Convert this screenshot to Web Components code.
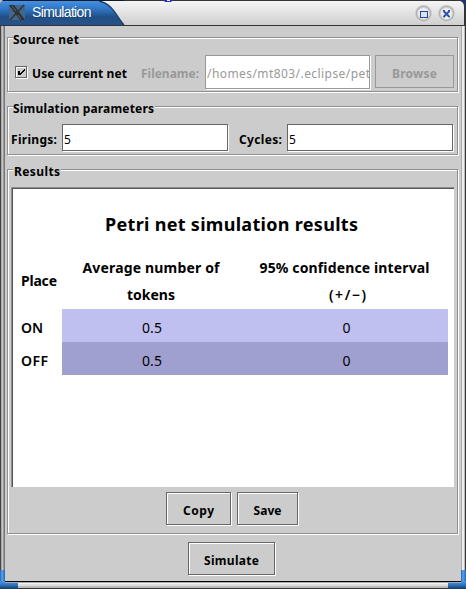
<!DOCTYPE html>
<html lang="en"><head><meta charset="utf-8"><title>Simulation</title>
<style>
html,body{margin:0;width:466px;height:589px;overflow:hidden;background:#ccc}
body{font-family:"Noto Sans","Open Sans",sans-serif;font-size:12px;color:#000}
</style></head><body>
<sim-window></sim-window>
<script>
const define=(name,html,setup)=>{
  const t=document.createElement('template');t.innerHTML=html;
  customElements.define(name,class extends HTMLElement{
    connectedCallback(){
      if(this.shadowRoot)return;
      this.attachShadow({mode:'open'}).append(t.content.cloneNode(true));
      if(setup)setup(this,this.shadowRoot);
    }
  });
};

/* A label whose letter spacing is set so that the text takes up the width w. */
define('ui-text',`<style>
:host{display:inline-block;white-space:pre;font-weight:700;line-height:16px;height:16px;flex:none}
:host([plain]){font-weight:400}
span{display:inline-block}
</style><span><slot></slot></span>`,(el,root)=>{
  const w=+el.getAttribute('w'),n=el.textContent.length,s=root.querySelector('span');
  if(!w)return;
  el.style.width=w+'px';
  const nat=s.getBoundingClientRect().width;
  s.style.letterSpacing=((w-nat)/Math.max(1,n-1))+'px';
});

define('ui-group',`<style>
:host{display:block;box-sizing:border-box;border:1px solid #8f8f8f;box-shadow:1px 1px #fff,inset 1px 1px #fff;position:relative}
.t{position:absolute;left:5px;top:-6px;background:#ccc;height:16px;padding-right:1px;display:flex}
</style><div class="t"><slot name="title"></slot></div><slot></slot>`);

define('ui-field',`<style>
:host{display:block;box-sizing:border-box;background:#fff;border:1px solid #666;box-shadow:1px 1px #fff;overflow:hidden;flex:none;height:27px;padding:6px 0 0 1px}
:host([disabled]){border-color:#999;color:#999;height:34px;padding-top:9px}
</style><slot></slot>`);

define('ui-button',`<style>
:host{display:flex;box-sizing:border-box;border:1px solid #666;box-shadow:1px 1px #fff,inset 1px 1px #fff;height:33px;justify-content:center;padding-top:10px;flex:none}
:host([disabled]){border-color:#999;color:#999;box-shadow:none}
</style><slot></slot>`);

define('ui-check',`<style>
:host{display:block;flex:none;width:13px;height:13px}svg{display:block}
</style><svg width="13" height="13" shape-rendering="crispEdges"><rect x=".5" y=".5" width="11" height="11" fill="none" stroke="#666"/><path d="M1.5 11V1.5H11M12.5 1V12.5H1" fill="none" stroke="#fff"/><path d="M3 5h2v2h1V6h1V5h1V4h1V3h1v2H9v1H8v1H7v1H6v1H3z" fill="#000"/></svg>`);

define('title-bar',`<style>
:host{display:block;height:26px}
svg{display:block}
.r{display:grid}.r>*{grid-area:1/1}
.n{font:14px/16px "Liberation Sans",Arial,sans-serif;color:#fff;margin:4px 0 0 32px;font-weight:400;text-shadow:1px 1px 1px #194778}
</style><div class="r"><svg width="466" height="26">
<defs><linearGradient id="g" x2="0" y2="1"><stop offset="0" stop-color="#f5f5f5"/><stop offset="1" stop-color="#cfcfcf"/></linearGradient>
<linearGradient id="b" x2="0" y2="1"><stop offset="0" stop-color="#4590e4"/><stop offset=".4" stop-color="#2b6fba"/><stop offset=".65" stop-color="#225085"/><stop offset="1" stop-color="#24528a"/></linearGradient>
<radialGradient id="c"><stop offset=".55" stop-color="#ededed"/><stop offset=".78" stop-color="#b2b2b2"/><stop offset="1" stop-color="#e6e6e6"/></radialGradient></defs>
<rect width="466" height="26" fill="#333"/><path d="M458 0h8v10h-1V4l-4-3z" fill="#1c3475"/>
<path d="M0 1H460Q464 2 464 7V25H0z" fill="url(#g)"/>
<path d="M0 1H98C112 3 115 15 124 25H0z" fill="url(#b)"/><path d="M99 1C113 4 116 16 124 25" fill="none" stroke="#193d6b" stroke-width="1.3"/>
<path d="M0 .5H124" stroke="#111b2b"/><path d="M0 0h3L0 3z" fill="#bbb"/><path d="M163 0h10l-2 2h-6z" fill="#2630c8"/><path d="M167 0h3v1h-3z" fill="#eef"/>
<rect x="9" y="5" width="16" height="15" fill="#40658f"/><path d="M9 5h5l11 15h-5z" fill="#302f30"/><path d="M24 5 10 20" stroke="#3a3535" stroke-width="1.7"/><path d="M12 6l4 5M18 15l3 4" stroke="#777" stroke-width=".8"/>
<circle cx="423.5" cy="13.500" r="9" fill="url(#c)"/><circle cx="446.500" cy="13.500" r="9" fill="url(#c)"/>
<rect x="420.500" y="11.500" width="7" height="6" fill="#dce3f2" stroke="#2446a0"/>
<path d="M443.500 11l6 6M449.500 11l-6 6" stroke="#2c50ae" stroke-width="1.9"/><path d="M443 10.500h2M448 10.500h2M443 16.500h2M448 16.500h2" stroke="#2c50ae"/>
</svg><ui-text class="n" w="59.500">Simulation</ui-text></div>`);

define('result-table',`<style>
:host{display:block}
.h{font-size:18px;text-align:center;padding:24px 4px 0 0;height:46px;line-height:24px;box-sizing:content-box}
.h ui-text{line-height:24px;height:24px}
.g{display:grid;grid-template-columns:49px 180px 206px;grid-template-rows:51px 33px 33px;width:435px;font-size:14px}
.g>*{display:flex;justify-content:center}
.g>.p{justify-content:flex-start;padding-left:8px}
.g>.col{flex-direction:column;justify-content:flex-start;align-items:center;gap:11px;margin-top:2px}
.a,.b{padding-top:11px}.a.v{background:#c0c0f0}.b.v{background:#a0a0d0}
.mid{padding-right:2px}.a.last,.b.last{padding-left:3px}.col.last{padding-right:1px}
</style><div class="h"><ui-text w="253">Petri net simulation results</ui-text></div>
<div class="g"><div class="p" style="padding-top:15px"><ui-text w="36">Place</ui-text></div>
<div class="col mid"><ui-text w="137">Average number of</ui-text><ui-text w="48">tokens</ui-text></div>
<div class="col last"><ui-text w="170">95% confidence interval</ui-text><ui-text w="37" style="margin-right:-6px;font-weight:600">(+/−)</ui-text></div>
<div class="p a"><ui-text w="22" style="font-weight:600">ON</ui-text></div><div class="a v"><ui-text plain w="20">0.5</ui-text></div><div class="a v last"><ui-text plain>0</ui-text></div>
<div class="p b"><ui-text w="27" style="font-weight:600">OFF</ui-text></div><div class="b v"><ui-text plain w="20">0.5</ui-text></div><div class="b v last"><ui-text plain>0</ui-text></div></div>`);

define('sim-window',`<style>
:host{display:grid;grid-template:26px 555px 8px/5px 456px 5px;width:466px;height:589px;background:#ccc}
title-bar{grid-column:1/4}
.l{background:linear-gradient(90deg,#444 1px,#aaa 1px 2px,#c8c8c8 2px 3px,#999 3px 4px,#777 4px)}
.rr{background:linear-gradient(90deg,#aaa 1px,#eee 1px 3px,#bbb 3px 4px,#333 4px)}
.l,.rr{display:flex;flex-direction:column;justify-content:flex-end}
.l i,.rr i{height:11px;background:linear-gradient(90deg,#2360a5,#58a4f5 40%,#2765ac)}
.f{grid-column:1/4;box-sizing:border-box;display:flex;justify-content:space-between;background:linear-gradient(#000 1px,#aaa 1px 2px,#f1f1f1 2px 3px,#ddd 3px 5px,#bbb 5px 7px,#333 7px)}
.f i{width:18px;height:8px;background:linear-gradient(#4b95e6,#3580d0 35%,#225c9e 70%,#153963);clip-path:polygon(0 0,5px 0,5px 2px,100% 2px,100% 100%,0 100%)}
.f i+i{transform:scaleX(-1)}
.c{padding:11px 3px 0 2px;box-sizing:border-box}
ui-group{width:451px}
.row{display:flex}
</style><title-bar></title-bar><div class="l"><i></i></div>
<div class="c">
<ui-group style="height:55px"><ui-text slot="title" w="66">Source net</ui-text>
<div class="row" style="padding:17px 0 0 7px"><ui-check style="margin-top:11px"></ui-check><ui-text w="95" style="margin:11px 14px 0 4px">Use current net</ui-text><ui-text w="58" style="margin:11px 6px 0 0;color:#999">Filename:</ui-text><ui-field disabled style="width:165px"><ui-text plain w="163">/homes/mt803/.eclipse/pet</ui-text></ui-field><ui-button disabled style="width:79px;margin-left:5px"><ui-text w="45">Browse</ui-text></ui-button></div></ui-group>
<ui-group style="height:49px;margin-top:14px"><ui-text slot="title" w="141">Simulation parameters</ui-text>
<div class="row" style="padding:17px 0 0 3px"><ui-text w="46" style="margin:8px 5px 0 0">Firings:</ui-text><ui-field style="width:166px"><ui-text plain>5</ui-text></ui-field><ui-text w="43" style="margin:8px 5px 0 11px">Cycles:</ui-text><ui-field style="width:166px"><ui-text plain>5</ui-text></ui-field></div></ui-group>
<ui-group style="height:365px;margin-top:14px"><ui-text slot="title" w="46" style="padding-left:1px">Results</ui-text>
<div style="margin:17px 0 0 3px;width:443px;height:300px;box-sizing:border-box;background:#fff;border:solid #8f8f8f;border-width:1px 0 0 1px;box-shadow:inset 1px 1px #555"><result-table style="padding-left:1px"></result-table></div>
<div class="row" style="padding:5px 0 0 158px;gap:6px"><ui-button style="width:65px"><ui-text w="31">Copy</ui-text></ui-button><ui-button style="width:61px"><ui-text w="28">Save</ui-text></ui-button></div></ui-group>
<ui-button style="width:87px;margin:8px 0 0 181px"><ui-text w="55">Simulate</ui-text></ui-button>
</div><div class="rr"><i></i></div><div class="f"><i></i><i></i></div>`);
</script></body></html>
